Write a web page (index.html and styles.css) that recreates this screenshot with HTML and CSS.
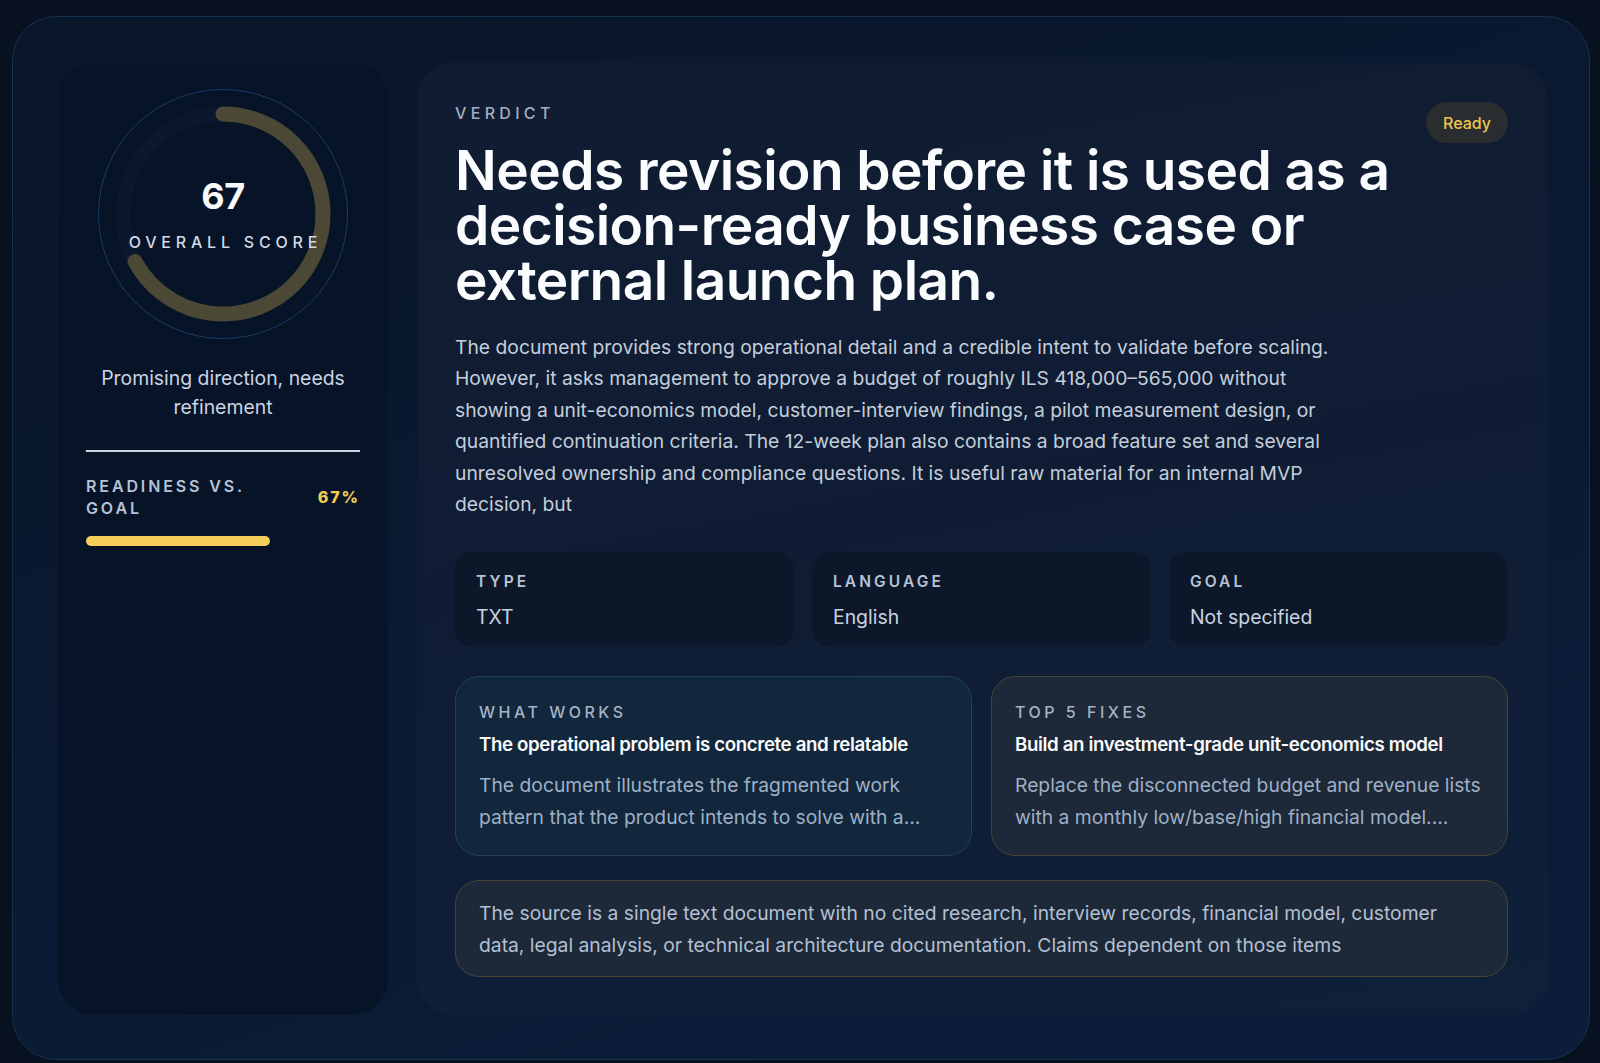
FILE: index.html
```html
<!DOCTYPE html>
<html lang="en">
<head>
<meta charset="utf-8">
<title>Verdict</title>
<link rel="stylesheet" href="styles.css">
</head>
<body>
<main class="frame">
  <aside class="score-panel">
    <div class="ring">
      <svg class="ring-svg" width="250" height="250" viewBox="0 0 250 250">
        <circle cx="125" cy="125" r="124.5" fill="none" stroke="#1a3d66" stroke-width="1"/>
        <circle cx="125" cy="125" r="100" fill="none" stroke="#0a172c" stroke-width="15"/>
        <circle cx="125" cy="125" r="100" fill="none" stroke="#4b4935" stroke-width="15" stroke-linecap="round" stroke-dasharray="421 628.3" transform="rotate(-90 125 125)"/>
      </svg>
      <div class="ring-text">
        <div class="score">67</div>
        <div class="score-label">OVERALL SCORE</div>
      </div>
    </div>
    <p class="score-caption">Promising direction, needs refinement</p>
    <div class="divider"></div>
    <div class="readiness">
      <div class="readiness-label">READINESS VS.<br>GOAL</div>
      <div class="readiness-value">67%</div>
    </div>
    <div class="bar"><div class="bar-fill" style="width:67%"></div></div>
  </aside>

  <section class="verdict-panel">
    <div class="verdict-head">
      <div class="eyebrow">VERDICT</div>
      <span class="badge">Ready</span>
    </div>
    <h1 class="headline">Needs revision before it is used as a decision-ready business case or external launch plan.</h1>
    <p class="summary">The document provides strong operational detail and a credible intent to validate before scaling. However, it asks management to approve a budget of roughly ILS 418,000–565,000 without showing a unit-economics model, customer-interview findings, a pilot measurement design, or quantified continuation criteria. The 12-week plan also contains a broad feature set and several unresolved ownership and compliance questions. It is useful raw material for an internal MVP decision, but</p>

    <div class="meta-grid">
      <div class="meta-card">
        <div class="meta-label">TYPE</div>
        <div class="meta-value">TXT</div>
      </div>
      <div class="meta-card">
        <div class="meta-label">LANGUAGE</div>
        <div class="meta-value">English</div>
      </div>
      <div class="meta-card">
        <div class="meta-label">GOAL</div>
        <div class="meta-value">Not specified</div>
      </div>
    </div>

    <div class="insight-grid">
      <div class="insight-card works">
        <div class="insight-label">WHAT WORKS</div>
        <div class="insight-title">The operational problem is concrete and relatable</div>
        <p class="insight-body">The document illustrates the fragmented work pattern that the product intends to solve with a...</p>
      </div>
      <div class="insight-card fixes">
        <div class="insight-label">TOP 5 FIXES</div>
        <div class="insight-title">Build an investment-grade unit-economics model</div>
        <p class="insight-body">Replace the disconnected budget and revenue lists with a monthly low/base/high financial model....</p>
      </div>
    </div>

    <div class="note-card">
      <p>The source is a single text document with no cited research, interview records, financial model, customer data, legal analysis, or technical architecture documentation. Claims dependent on those items</p>
    </div>
  </section>
</main>
</body>
</html>
```
FILE: styles.css
```css
* { box-sizing: border-box; }

html, body {
  margin: 0;
  padding: 0;
}

body {
  background: #07111f;
  font-family: Inter, "Noto Sans", "Liberation Sans", sans-serif;
  color: #e2e8f0;
  width: 1600px;
  height: 1063px;
  overflow: hidden;
}

.frame {
  margin: 16px 10px 0 12px;
  height: 1044px;
  border: 1px solid #16304f;
  border-radius: 44px;
  background: linear-gradient(160deg, #0a1629 0%, #0a1a33 55%, #0b1d3b 100%);
  padding: 46px 42px 44px 45px;
  display: grid;
  grid-template-columns: 330px 1130px;
  column-gap: 29px;
}

/* ---------- left score panel ---------- */
.score-panel {
  background: #071327;
  border-radius: 36px;
  padding: 26px 28px;
  display: flex;
  flex-direction: column;
  align-items: stretch;
}

.ring {
  display: grid;
  justify-items: center;
  align-items: center;
}

.ring > * { grid-area: 1 / 1; }

.ring-svg { display: block; }

.ring-text {
  display: flex;
  flex-direction: column;
  align-items: center;
  gap: 20px;
}

.score {
  font-size: 36px;
  line-height: 36px;
  font-weight: 700;
  color: #f8fafc;
  letter-spacing: -0.5px;
}

.score-label {
  font-size: 16px;
  line-height: 16px;
  font-weight: 500;
  letter-spacing: 0.3em;
  margin-right: -0.3em;
  color: #d3dae5;
}

.score-caption {
  margin: 25px 0 0;
  text-align: center;
  font-size: 19.4px;
  line-height: 29px;
  color: #c9d4e3;
}

.divider {
  margin-top: 28px;
  height: 2px;
  background: #cfd5de;
}

.readiness {
  margin-top: 23px;
  display: flex;
  justify-content: space-between;
  align-items: center;
}

.readiness-label {
  font-size: 16px;
  line-height: 22px;
  font-weight: 600;
  letter-spacing: 0.18em;
  color: #b6c3d6;
}

.readiness-value {
  font-size: 16px;
  font-weight: 800;
  letter-spacing: 0.12em;
  color: #f2cc55;
}

.bar {
  margin-top: 17px;
  height: 10px;
  border-radius: 6px;
}

.bar-fill {
  height: 100%;
  border-radius: 6px;
  background: #f5cf5a;
}

/* ---------- right verdict panel ---------- */
.verdict-panel {
  background: linear-gradient(170deg, #101c31 0%, #0f1d35 60%, #0f2039 100%);
  border-radius: 36px;
  padding: 39px 39px 38px 38px;
  display: flex;
  flex-direction: column;
}

.verdict-head {
  display: flex;
  justify-content: space-between;
  align-items: flex-start;
}

.eyebrow {
  margin-top: 2px;
  font-size: 16px;
  line-height: 18px;
  font-weight: 500;
  letter-spacing: 0.27em;
  color: #a3afc0;
}

.badge {
  display: inline-flex;
  align-items: center;
  justify-content: center;
  height: 41px;
  padding: 0 17px;
  border-radius: 21px;
  background: #2a2d2f;
  color: #ecc54e;
  font-size: 16px;
  font-weight: 500;
}

.headline {
  margin: 0;
  max-width: 1000px;
  font-size: 55px;
  line-height: 55px;
  font-weight: 600;
  letter-spacing: -0.01em;
  color: #fbfcfe;
}

.summary {
  margin: 24px 0 0;
  max-width: 880px;
  font-size: 19.3px;
  line-height: 31.4px;
  color: #c4cedb;
}

.meta-grid {
  margin-top: 32px;
  display: grid;
  grid-template-columns: repeat(3, 1fr);
  gap: 18px;
}

.meta-card {
  height: 95px;
  background: #0c1729;
  border-radius: 18px;
  padding: 21px 21px 19px;
  display: flex;
  flex-direction: column;
  gap: 14px;
}

.meta-label {
  font-size: 15.5px;
  line-height: 18px;
  font-weight: 600;
  letter-spacing: 0.2em;
  color: #b8c4d5;
}

.meta-value {
  font-size: 19.4px;
  line-height: 24px;
  color: #c9d3e0;
}

.insight-grid {
  margin-top: 29px;
  display: grid;
  grid-template-columns: 1fr 1fr;
  gap: 19px;
}

.insight-card {
  height: 180px;
  border-radius: 24px;
  padding: 26px 20px 20px 23px;
}

.insight-card.works {
  background: #12273b;
  border: 1px solid #1f4352;
}

.insight-card.fixes {
  background: #1d2838;
  border: 1px solid #474634;
}

.insight-label {
  font-size: 16px;
  line-height: 18px;
  font-weight: 500;
  letter-spacing: 0.22em;
  color: #a6b3c6;
}

.insight-title {
  margin-top: 12px;
  font-size: 18.7px;
  line-height: 24px;
  font-weight: 600;
  letter-spacing: -0.02em;
  color: #f8fafc;
}

.insight-body {
  margin: 13px 0 0;
  font-size: 19.3px;
  line-height: 31.5px;
  color: #9fb0c6;
}

.note-card {
  margin-top: 24px;
  height: 97px;
  background: #1d2838;
  border: 1px solid #474634;
  border-radius: 24px;
  padding: 16px 23px;
}

.note-card p {
  margin: 0;
  font-size: 19.3px;
  line-height: 32px;
  color: #b3c0d2;
}
```
